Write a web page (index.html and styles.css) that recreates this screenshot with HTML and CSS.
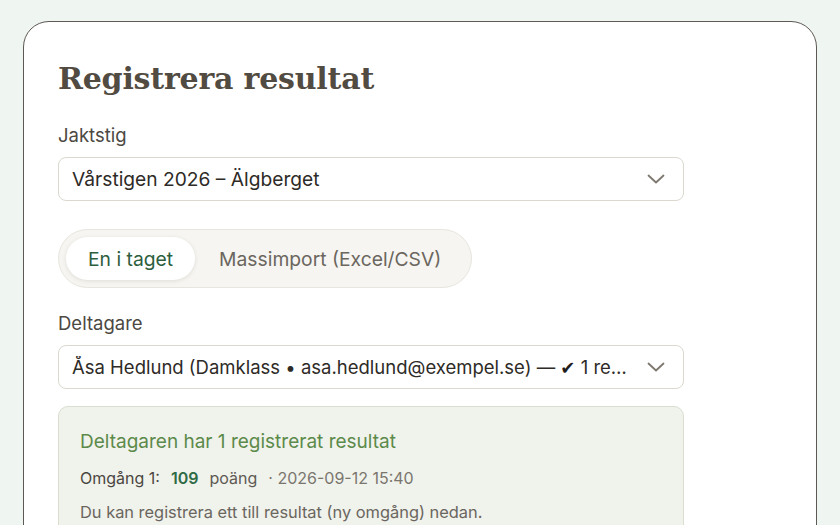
FILE: index.html
```html
<!DOCTYPE html>
<html lang="sv">
<head>
<meta charset="utf-8">
<title>Registrera resultat</title>
<link rel="stylesheet" href="styles.css">
</head>
<body>
<main class="card">
  <h1 class="title">Registrera resultat</h1>

  <div class="field">
    <label class="label">Jaktstig</label>
    <div class="select">
      <span class="select-text">Vårstigen 2026 – Älgberget</span>
      <svg class="chev" width="18" height="10" viewBox="0 0 18 10"><path d="M1.5 1.5 L9 8.5 L16.5 1.5" fill="none" stroke="#7d776e" stroke-width="1.8" stroke-linecap="round" stroke-linejoin="round"/></svg>
    </div>
  </div>

  <div class="segmented">
    <span class="seg seg-active">En i taget</span>
    <span class="seg">Massimport (Excel/CSV)</span>
  </div>

  <div class="field">
    <label class="label">Deltagare</label>
    <div class="select">
      <span class="select-text select-text-long">Åsa Hedlund (Damklass • asa.hedlund@exempel.se) — <span class="check">✔</span> 1 registrerat resultat</span>
      <svg class="chev" width="18" height="10" viewBox="0 0 18 10"><path d="M1.5 1.5 L9 8.5 L16.5 1.5" fill="none" stroke="#7d776e" stroke-width="1.8" stroke-linecap="round" stroke-linejoin="round"/></svg>
    </div>
  </div>

  <section class="info">
    <h2 class="info-title">Deltagaren har 1 registrerat resultat</h2>
    <p class="info-row"><span class="round">Omgång 1:</span><strong class="points">109</strong><span class="unit">poäng</span><span class="date">· 2026-09-12 15:40</span></p>
    <p class="info-note">Du kan registrera ett till resultat (ny omgång) nedan.</p>
  </section>
</main>
</body>
</html>
```

FILE: styles.css
```css
* { box-sizing: border-box; }
html, body { margin: 0; padding: 0; }
body {
  background: #eff5f1;
  font-family: "Inter", "Noto Sans", sans-serif;
  color: #3f3b35;
  padding: 21px 23px 0;
  height: 525px;
  overflow: hidden;
}
.card {
  background: #fff;
  border: 1.5px solid #5d5954;
  border-radius: 26px;
  padding: 36px 34px 40px;
  min-height: 600px;
}
.title {
  font-family: "DejaVu Serif", "Liberation Serif", serif;
  font-weight: 700;
  font-size: 30px;
  color: #514b42;
  margin: 0 0 23px;
  line-height: 42px;
  letter-spacing: -0.2px;
}
.field { display: flex; flex-direction: column; width: 626px; }
.label {
  font-size: 18.5px;
  color: #4c4842;
  line-height: 24px;
  margin-bottom: 10px;
}
.select {
  height: 44px;
  border: 1.5px solid #dad8cf;
  border-radius: 8px;
  display: flex;
  align-items: center;
  padding: 0 18px 0 13px;
  gap: 20px;
}
.select-text {
  flex: 1;
  font-size: 19.2px;
  color: #2e2b27;
  white-space: nowrap;
  overflow: hidden;
  text-overflow: ellipsis;
}
.select-text-long { font-size: 18.5px; }
.check { font-family: "DejaVu Sans", sans-serif; font-size: 18px; color: #1f1d1a; }
.chev { flex: none; }
.segmented {
  display: inline-flex;
  align-items: center;
  margin: 28px 0 23px;
  padding: 7px;
  background: #f6f5f1;
  border: 1.5px solid #e7e5dd;
  border-radius: 30px;
}
.seg {
  font-size: 19.3px;
  color: #6b665e;
  padding: 0 23px 0 24px;
  height: 43px;
  display: flex;
  align-items: center;
  border-radius: 22px;
}
.seg-active {
  background: #fff;
  color: #2d5e3e;
  box-shadow: 0 1px 4px rgba(60, 55, 40, 0.12);
  padding: 0 22px;
}
.info {
  margin-top: 17px;
  width: 626px;
  background: #f0f2ec;
  border: 1.5px solid #d9decf;
  border-radius: 10px;
  padding: 23px 21px 22px;
}
.info-title {
  margin: 0 0 13px;
  font-size: 19px;
  font-weight: 400;
  color: #5c8a4a;
  line-height: 24px;
}
.info-row {
  margin: 0 0 12px;
  font-size: 16px;
  line-height: 22px;
  color: #5e5a53;
  display: flex;
  align-items: baseline;
}
.round { color: #4a463f; margin-right: 11px; }
.points { color: #2f6b45; font-weight: 600; margin-right: 11px; }
.unit { margin-right: 11px; }
.date { color: #7a766e; }
.info-note {
  margin: 0;
  font-size: 16.4px;
  line-height: 22px;
  color: #6a665e;
}
```
